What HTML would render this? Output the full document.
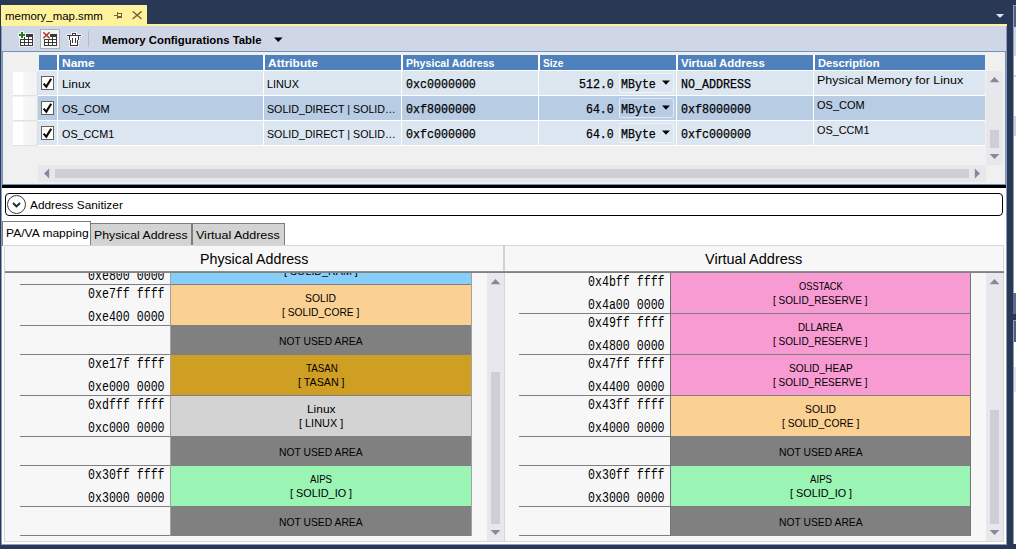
<!DOCTYPE html>
<html lang="en">
<head>
<meta charset="utf-8">
<title>memory_map.smm</title>
<style>
html,body{margin:0;padding:0;}
body{width:1016px;height:549px;overflow:hidden;background:#293955;font-family:"Liberation Sans",sans-serif;font-size:12px;color:#000;}
#root{position:relative;width:1016px;height:549px;overflow:hidden;background:#293955;}
#root div,#root svg{position:absolute;box-sizing:border-box;}
.t{white-space:pre;transform-origin:0 0;}
.m{font-family:"Liberation Mono",monospace;}
</style>
</head>
<body>
<div id="root">
<div style="left:1px;top:5px;width:146px;height:21px;background:#fff29d;"></div>
<div style="left:1px;top:24px;width:1006px;height:2px;background:#fff29d;"></div>
<div class="t" style="left:5.26px;top:8px;font-size:11.5px;line-height:16px;height:16px;transform:scaleX(0.9948);">memory_map.smm</div>
<svg style="left:113px;top:11px" width="10" height="10" viewBox="0 0 10 10"><g fill="none" stroke="#75633d" stroke-width="1" shape-rendering="crispEdges"><path d="M0.5 4.5H4"/><path d="M4.5 1V8"/><path d="M4.5 2.5H8.5V6.5H4.5"/><path d="M4.5 5.5H8.5"/></g></svg>
<svg style="left:132px;top:11px" width="10" height="10" viewBox="0 0 10 10"><path d="M0.6 0.3L9.6 8M9.6 0.3L0.6 8" stroke="#75633d" stroke-width="1.45" fill="none"/></svg>
<svg style="left:995px;top:13px" width="10" height="6" viewBox="0 0 10 6"><path d="M1 1H9L5 5Z" fill="#dfe3ec"/></svg>
<div style="left:1px;top:26px;width:1006px;height:25px;background:#8e9bbc;"></div>
<div style="left:2px;top:26px;width:1004px;height:25px;background:#cfd6e5;"></div>
<svg style="left:19px;top:33px" width="15" height="14" viewBox="0 0 15 14" shape-rendering="crispEdges"><rect x="6" y="0" width="9" height="3" fill="rgba(255,255,255,0.62)"/><rect x="0" y="3" width="15" height="11" fill="rgba(255,255,255,0.62)"/><rect x="7" y="1" width="7" height="3" fill="#3a3a3a"/><rect x="5" y="4" width="9" height="3" fill="#3a3a3a"/><rect x="1" y="6" width="13" height="7" fill="#3a3a3a"/><rect x="6" y="4" width="3" height="2" fill="#fbfbfb"/><rect x="10" y="4" width="3" height="2" fill="#fbfbfb"/><rect x="2" y="7" width="3" height="2" fill="#fbfbfb"/><rect x="6" y="7" width="3" height="2" fill="#fbfbfb"/><rect x="10" y="7" width="3" height="2" fill="#fbfbfb"/><rect x="2" y="10" width="3" height="2" fill="#fbfbfb"/><rect x="6" y="10" width="3" height="2" fill="#fbfbfb"/><rect x="10" y="10" width="3" height="2" fill="#fbfbfb"/></svg>
<svg style="left:18px;top:31px" width="8" height="8" viewBox="0 0 8 8" shape-rendering="crispEdges"><rect x="2" y="0" width="4" height="8" fill="rgba(255,255,255,0.62)"/><rect x="0" y="2" width="8" height="4" fill="rgba(255,255,255,0.62)"/><rect x="3" y="1" width="2" height="6" fill="#1e7d1e"/><rect x="1" y="3" width="6" height="2" fill="#1e7d1e"/></svg>
<div style="left:40px;top:29px;width:20px;height:20px;background:#f5f5f5;border:1px solid #adb1b9;"></div>
<svg style="left:43px;top:33px" width="15" height="14" viewBox="0 0 15 14" shape-rendering="crispEdges"><rect x="7" y="1" width="7" height="3" fill="#3a3a3a"/><rect x="5" y="4" width="9" height="3" fill="#3a3a3a"/><rect x="1" y="6" width="13" height="7" fill="#3a3a3a"/><rect x="6" y="4" width="3" height="2" fill="#fbfbfb"/><rect x="10" y="4" width="3" height="2" fill="#fbfbfb"/><rect x="2" y="7" width="3" height="2" fill="#fbfbfb"/><rect x="6" y="7" width="3" height="2" fill="#fbfbfb"/><rect x="10" y="7" width="3" height="2" fill="#fbfbfb"/><rect x="2" y="10" width="3" height="2" fill="#fbfbfb"/><rect x="6" y="10" width="3" height="2" fill="#fbfbfb"/><rect x="10" y="10" width="3" height="2" fill="#fbfbfb"/></svg>
<svg style="left:42px;top:31px" width="9" height="9" viewBox="0 0 9 9"><path d="M1.3 1.2L7.6 7.2M7.6 1.2L1.3 7.2" stroke="#f5f5f5" stroke-width="3" fill="none"/><path d="M1.3 1.2L7.6 7.2M7.6 1.2L1.3 7.2" stroke="#b3331f" stroke-width="1.45" fill="none"/></svg>
<svg style="left:66px;top:32px" width="16" height="15" viewBox="0 0 16 15" shape-rendering="crispEdges"><rect x="5" y="0" width="6" height="3" fill="rgba(255,255,255,0.62)"/><rect x="0" y="2" width="16" height="3" fill="rgba(255,255,255,0.62)"/><rect x="2" y="4" width="12" height="5" fill="rgba(255,255,255,0.62)"/><rect x="3" y="8" width="10" height="7" fill="rgba(255,255,255,0.62)"/><rect x="6" y="1" width="4" height="2" fill="#3a3a3a"/><rect x="7" y="2" width="2" height="1" fill="#fbfbfb"/><rect x="1" y="3" width="14" height="1" fill="#3a3a3a"/><rect x="3" y="4" width="10" height="4" fill="#3a3a3a"/><rect x="4" y="4" width="8" height="4" fill="#fbfbfb"/><rect x="4" y="8" width="8" height="6" fill="#3a3a3a"/><rect x="5" y="8" width="6" height="5" fill="#fbfbfb"/><rect x="6" y="6" width="1" height="5" fill="#3a3a3a"/><rect x="9" y="6" width="1" height="5" fill="#3a3a3a"/></svg>
<div style="left:88px;top:31px;width:1px;height:16px;background:#b3bac9;"></div>
<div class="t" style="left:102.06px;top:32px;font-size:11.5px;line-height:16px;height:16px;font-weight:bold;transform:scaleX(0.9881);">Memory Configurations Table</div>
<svg style="left:273px;top:37px" width="10" height="6" viewBox="0 0 10 6"><path d="M1 0.5H9.6L5.3 5Z" fill="#000"/></svg>
<div style="left:1px;top:51px;width:1006px;height:134px;background:#8e9bbc;"></div>
<div style="left:2px;top:51px;width:1004px;height:134px;background:#f0f0f0;border:1px solid #7192b8;"></div>
<div style="left:39px;top:55px;width:946px;height:16px;background:#fff;"></div>
<div style="left:39px;top:55px;width:18px;height:15px;background:#4f81bd;"></div>
<div style="left:59px;top:55px;width:204px;height:15px;background:#4f81bd;"></div>
<div class="t" style="left:62.21px;top:55px;font-size:11.5px;line-height:16px;height:16px;color:#fff;font-weight:bold;transform:scaleX(1.0400);">Name</div>
<div style="left:265px;top:55px;width:136px;height:15px;background:#4f81bd;"></div>
<div class="t" style="left:268.45px;top:55px;font-size:11.5px;line-height:16px;height:16px;color:#fff;font-weight:bold;transform:scaleX(1.0417);">Attribute</div>
<div style="left:403px;top:55px;width:135px;height:15px;background:#4f81bd;"></div>
<div class="t" style="left:406.12px;top:55px;font-size:11.5px;line-height:16px;height:16px;color:#fff;font-weight:bold;transform:scaleX(0.9271);">Physical Address</div>
<div style="left:540px;top:55px;width:136px;height:15px;background:#4f81bd;"></div>
<div class="t" style="left:542.67px;top:55px;font-size:11.5px;line-height:16px;height:16px;color:#fff;font-weight:bold;transform:scaleX(0.8818);">Size</div>
<div style="left:678px;top:55px;width:135px;height:15px;background:#4f81bd;"></div>
<div class="t" style="left:681.05px;top:55px;font-size:11.5px;line-height:16px;height:16px;color:#fff;font-weight:bold;transform:scaleX(0.9929);">Virtual Address</div>
<div style="left:815px;top:55px;width:170px;height:15px;background:#4f81bd;"></div>
<div class="t" style="left:818.18px;top:55px;font-size:11.5px;line-height:16px;height:16px;color:#fff;font-weight:bold;transform:scaleX(0.9726);">Description</div>
<div style="left:13px;top:72px;width:25px;height:23px;background:linear-gradient(90deg,#fff 0,#fff 40%,#f7f8fa 41%,#f1f2f4 100%);border-right:1px solid #dcdcdc;"></div>
<div style="left:13px;top:95px;width:25px;height:1px;background:#e1e1e1;"></div>
<div style="left:38px;top:71px;width:947px;height:24px;background:#fff;"></div>
<div style="left:38px;top:71px;width:19px;height:24px;background:#dce6f1;"></div>
<div style="left:58px;top:71px;width:205px;height:24px;background:#dce6f1;"></div>
<div style="left:264px;top:71px;width:137px;height:24px;background:#dce6f1;"></div>
<div style="left:402px;top:71px;width:136px;height:24px;background:#dce6f1;"></div>
<div style="left:539px;top:71px;width:137px;height:24px;background:#dce6f1;"></div>
<div style="left:677px;top:71px;width:136px;height:24px;background:#dce6f1;"></div>
<div style="left:814px;top:71px;width:171px;height:24px;background:#dce6f1;"></div>
<div style="left:38px;top:95px;width:947px;height:1px;background:#fff;"></div>
<div style="left:41px;top:76px;width:13px;height:14px;background:#fff;border:1px solid #5f5f5f;"></div>
<svg style="left:42px;top:77px" width="11" height="12" viewBox="0 0 11 12"><path d="M1.6 6.6L4.3 9.6L9.2 1.8" stroke="#0a0a0a" stroke-width="2.15" fill="none"/></svg>
<div class="t" style="left:62.02px;top:76px;font-size:11.5px;line-height:16px;height:16px;transform:scaleX(1.0346);">Linux</div>
<div class="t" style="left:266.86px;top:76px;font-size:11.5px;line-height:16px;height:16px;transform:scaleX(0.9422);">LINUX</div>
<div class="t m" style="left:406.08px;top:77px;font-size:12px;line-height:16px;height:16px;transform:scaleX(0.9700);-webkit-text-stroke:0.25px #000;">0xc0000000</div>
<div class="t m" style="left:579.33px;top:77px;font-size:12px;line-height:16px;height:16px;transform:scaleX(0.9676);-webkit-text-stroke:0.25px #000;">512.0</div>
<div style="left:619px;top:73px;width:55px;height:20px;background:transparent;border:1px solid rgba(255,255,255,0.55);border-radius:2px;"></div>
<div class="t m" style="left:620.58px;top:77px;font-size:12px;line-height:16px;height:16px;transform:scaleX(0.9676);-webkit-text-stroke:0.25px #000;">MByte</div>
<svg style="left:661px;top:80px" width="10" height="6" viewBox="0 0 10 6"><path d="M1 0.5H9L5 4.8Z" fill="#000"/></svg>
<div class="t m" style="left:680.83px;top:77px;font-size:12px;line-height:16px;height:16px;transform:scaleX(0.9736);-webkit-text-stroke:0.25px #000;">NO_ADDRESS</div>
<div class="t" style="left:816.97px;top:72px;font-size:11.5px;line-height:16px;height:16px;transform:scaleX(1.0838);">Physical Memory for Linux</div>
<div style="left:13px;top:97px;width:25px;height:23px;background:linear-gradient(90deg,#fff 0,#fff 40%,#f7f8fa 41%,#f1f2f4 100%);border-right:1px solid #dcdcdc;"></div>
<div style="left:13px;top:120px;width:25px;height:1px;background:#e1e1e1;"></div>
<div style="left:38px;top:96px;width:947px;height:24px;background:#fff;"></div>
<div style="left:38px;top:96px;width:19px;height:24px;background:#b8cce4;"></div>
<div style="left:58px;top:96px;width:205px;height:24px;background:#b8cce4;"></div>
<div style="left:264px;top:96px;width:137px;height:24px;background:#b8cce4;"></div>
<div style="left:402px;top:96px;width:136px;height:24px;background:#b8cce4;"></div>
<div style="left:539px;top:96px;width:137px;height:24px;background:#b8cce4;"></div>
<div style="left:677px;top:96px;width:136px;height:24px;background:#b8cce4;"></div>
<div style="left:814px;top:96px;width:171px;height:24px;background:#b8cce4;"></div>
<div style="left:38px;top:120px;width:947px;height:1px;background:#fff;"></div>
<div style="left:41px;top:101px;width:13px;height:14px;background:#fff;border:1px solid #5f5f5f;"></div>
<svg style="left:42px;top:102px" width="11" height="12" viewBox="0 0 11 12"><path d="M1.6 6.6L4.3 9.6L9.2 1.8" stroke="#0a0a0a" stroke-width="2.15" fill="none"/></svg>
<div class="t" style="left:62.09px;top:101px;font-size:11.5px;line-height:16px;height:16px;transform:scaleX(0.9562);">OS_COM</div>
<div class="t" style="left:266.87px;top:101px;font-size:11.5px;line-height:16px;height:16px;transform:scaleX(0.9263);">SOLID_DIRECT | SOLID…</div>
<div class="t m" style="left:406.08px;top:102px;font-size:12px;line-height:16px;height:16px;transform:scaleX(0.9700);-webkit-text-stroke:0.25px #000;">0xf8000000</div>
<div class="t m" style="left:586.34px;top:102px;font-size:12px;line-height:16px;height:16px;transform:scaleX(0.9593);-webkit-text-stroke:0.25px #000;">64.0</div>
<div style="left:619px;top:98px;width:55px;height:20px;background:transparent;border:1px solid rgba(255,255,255,0.55);border-radius:2px;"></div>
<div class="t m" style="left:620.58px;top:102px;font-size:12px;line-height:16px;height:16px;transform:scaleX(0.9676);-webkit-text-stroke:0.25px #000;">MByte</div>
<svg style="left:661px;top:105px" width="10" height="6" viewBox="0 0 10 6"><path d="M1 0.5H9L5 4.8Z" fill="#000"/></svg>
<div class="t m" style="left:680.83px;top:102px;font-size:12px;line-height:16px;height:16px;transform:scaleX(0.9736);-webkit-text-stroke:0.25px #000;">0xf8000000</div>
<div class="t" style="left:817.09px;top:97px;font-size:11.5px;line-height:16px;height:16px;transform:scaleX(0.9562);">OS_COM</div>
<div style="left:13px;top:122px;width:25px;height:23px;background:linear-gradient(90deg,#fff 0,#fff 40%,#f7f8fa 41%,#f1f2f4 100%);border-right:1px solid #dcdcdc;"></div>
<div style="left:13px;top:145px;width:25px;height:1px;background:#e1e1e1;"></div>
<div style="left:38px;top:121px;width:947px;height:24px;background:#fff;"></div>
<div style="left:38px;top:121px;width:19px;height:24px;background:#dce6f1;"></div>
<div style="left:58px;top:121px;width:205px;height:24px;background:#dce6f1;"></div>
<div style="left:264px;top:121px;width:137px;height:24px;background:#dce6f1;"></div>
<div style="left:402px;top:121px;width:136px;height:24px;background:#dce6f1;"></div>
<div style="left:539px;top:121px;width:137px;height:24px;background:#dce6f1;"></div>
<div style="left:677px;top:121px;width:136px;height:24px;background:#dce6f1;"></div>
<div style="left:814px;top:121px;width:171px;height:24px;background:#dce6f1;"></div>
<div style="left:38px;top:145px;width:947px;height:1px;background:#fff;"></div>
<div style="left:41px;top:126px;width:13px;height:14px;background:#fff;border:1px solid #5f5f5f;"></div>
<svg style="left:42px;top:127px" width="11" height="12" viewBox="0 0 11 12"><path d="M1.6 6.6L4.3 9.6L9.2 1.8" stroke="#0a0a0a" stroke-width="2.15" fill="none"/></svg>
<div class="t" style="left:62.11px;top:126px;font-size:11.5px;line-height:16px;height:16px;transform:scaleX(0.9380);">OS_CCM1</div>
<div class="t" style="left:266.87px;top:126px;font-size:11.5px;line-height:16px;height:16px;transform:scaleX(0.9263);">SOLID_DIRECT | SOLID…</div>
<div class="t m" style="left:406.08px;top:127px;font-size:12px;line-height:16px;height:16px;transform:scaleX(0.9700);-webkit-text-stroke:0.25px #000;">0xfc000000</div>
<div class="t m" style="left:586.34px;top:127px;font-size:12px;line-height:16px;height:16px;transform:scaleX(0.9593);-webkit-text-stroke:0.25px #000;">64.0</div>
<div style="left:619px;top:123px;width:55px;height:20px;background:transparent;border:1px solid rgba(255,255,255,0.55);border-radius:2px;"></div>
<div class="t m" style="left:620.58px;top:127px;font-size:12px;line-height:16px;height:16px;transform:scaleX(0.9676);-webkit-text-stroke:0.25px #000;">MByte</div>
<svg style="left:661px;top:130px" width="10" height="6" viewBox="0 0 10 6"><path d="M1 0.5H9L5 4.8Z" fill="#000"/></svg>
<div class="t m" style="left:680.83px;top:127px;font-size:12px;line-height:16px;height:16px;transform:scaleX(0.9736);-webkit-text-stroke:0.25px #000;">0xfc000000</div>
<div class="t" style="left:817.11px;top:122px;font-size:11.5px;line-height:16px;height:16px;transform:scaleX(0.9426);">OS_CCM1</div>
<div style="left:986px;top:71px;width:17px;height:94px;background:#e8e8ec;"></div>
<svg style="left:989px;top:76px" width="11" height="7" viewBox="0 0 11 7"><path d="M0.6 6.3L5.5 1.1L10.4 6.3Z" fill="#868999"/></svg>
<div style="left:990px;top:130px;width:9px;height:18px;background:#cecfd4;"></div>
<svg style="left:989px;top:153px" width="11" height="7" viewBox="0 0 11 7"><path d="M0.6 0.9L5.5 6.1L10.4 0.9Z" fill="#868999"/></svg>
<div style="left:38px;top:165px;width:948px;height:17px;background:#e8e8ec;"></div>
<svg style="left:43px;top:168px" width="7" height="11" viewBox="0 0 7 11"><path d="M6.2 0.5L1 5.5L6.2 10.5Z" fill="#868999"/></svg>
<div style="left:55px;top:169px;width:914px;height:9px;background:#cecfd4;"></div>
<svg style="left:974px;top:168px" width="7" height="11" viewBox="0 0 7 11"><path d="M0.8 0.5L6 5.5L0.8 10.5Z" fill="#868999"/></svg>
<div style="left:1px;top:185px;width:1006px;height:3px;background:#8e9bbc;"></div>
<div style="left:2px;top:185px;width:1004px;height:3px;background:#000;"></div>
<div style="left:1px;top:188px;width:1006px;height:357px;background:#8e9bbc;"></div>
<div style="left:2px;top:188px;width:1004px;height:356px;background:#fff;"></div>
<div style="left:5px;top:193px;width:998px;height:23px;background:#fff;border:1px solid #000;border-radius:4px;"></div>
<div style="left:7px;top:195px;width:19px;height:19px;background:#fff;border:1px solid #3a3a3a;border-radius:50%;"></div>
<svg style="left:11px;top:201px" width="11" height="8" viewBox="0 0 11 8"><path d="M2 2L5.5 5.5L9 2" stroke="#222" stroke-width="1.8" fill="none"/></svg>
<div class="t" style="left:30.15px;top:197px;font-size:11.5px;line-height:16px;height:16px;transform:scaleX(1.0300);">Address Sanitizer</div>
<div style="left:90px;top:223px;width:102px;height:23px;background:#d3d3d3;border:1px solid #7c7c7c;border-bottom:none;"></div>
<div style="left:192px;top:223px;width:93px;height:23px;background:#d3d3d3;border:1px solid #7c7c7c;border-bottom:none;"></div>
<div style="left:2px;top:221px;width:89px;height:25px;background:#fff;border:1px solid #7c7c7c;border-bottom:none;"></div>
<div class="t" style="left:5.75px;top:225px;font-size:11.5px;line-height:16px;height:16px;transform:scaleX(1.0474);">PA/VA mapping</div>
<div class="t" style="left:93.98px;top:227px;font-size:11.5px;line-height:16px;height:16px;transform:scaleX(1.0686);">Physical Address</div>
<div class="t" style="left:196.3px;top:227px;font-size:11.5px;line-height:16px;height:16px;transform:scaleX(1.0864);">Virtual Address</div>
<div style="left:4px;top:245px;width:1000px;height:297px;background:#f7f7f7;border:1px solid #d6d6d6;"></div>
<div class="t" style="left:200.32px;top:250px;font-size:14.5px;line-height:18px;height:18px;transform:scaleX(0.9807);">Physical Address</div>
<div class="t" style="left:705.05px;top:250px;font-size:14.5px;line-height:18px;height:18px;">Virtual Address</div>
<div style="left:5px;top:271px;width:999px;height:1px;background:#8e8e8e;"></div>
<div style="left:5px;top:272px;width:999px;height:1px;background:#818181;"></div>
<div style="left:503px;top:246px;width:2px;height:25px;background:#d2d2d2;"></div>
<div style="left:504px;top:273px;width:1px;height:268px;background:#d6d6d6;"></div>
<div style="left:5px;top:273px;width:999px;height:268px;overflow:hidden;"><div style="left:-5px;top:-273px;width:1016px;height:549px;">
<div style="left:171px;top:273px;width:300px;height:11px;background:#87cefa;"></div>
<div style="left:20px;top:284px;width:451px;height:1px;background:#7f7f7f;"></div>
<div class="t" style="left:283.94px;top:263px;font-size:11.5px;line-height:16px;height:16px;transform:scaleX(0.9314);">[ SOLID_RAM ]</div>
<div class="t m" style="left:88.27px;top:267px;font-size:14px;line-height:18px;height:18px;transform:scaleX(0.8286);">0xe800 0000</div>
<div style="left:171px;top:285px;width:300px;height:40px;background:#fad193;"></div>
<div style="left:20px;top:325px;width:451px;height:1px;background:#7f7f7f;"></div>
<div class="t" style="left:305.48px;top:290px;font-size:11.5px;line-height:16px;height:16px;transform:scaleX(0.8985);">SOLID</div>
<div class="t" style="left:282.49px;top:304px;font-size:11.5px;line-height:16px;height:16px;transform:scaleX(0.8900);">[ SOLID_CORE ]</div>
<div class="t m" style="left:88.27px;top:285px;font-size:14px;line-height:18px;height:18px;transform:scaleX(0.8286);">0xe7ff ffff</div>
<div class="t m" style="left:88.27px;top:308px;font-size:14px;line-height:18px;height:18px;transform:scaleX(0.8286);">0xe400 0000</div>
<div style="left:171px;top:326px;width:300px;height:28px;background:#808080;"></div>
<div style="left:20px;top:354px;width:451px;height:1px;background:#7f7f7f;"></div>
<div class="t" style="left:278.98px;top:333px;font-size:11.5px;line-height:16px;height:16px;transform:scaleX(0.8984);">NOT USED AREA</div>
<div style="left:171px;top:355px;width:300px;height:40px;background:#cf9f24;"></div>
<div style="left:20px;top:395px;width:451px;height:1px;background:#7f7f7f;"></div>
<div class="t" style="left:305.5px;top:360px;font-size:11.5px;line-height:16px;height:16px;transform:scaleX(0.8486);">TASAN</div>
<div class="t" style="left:297.94px;top:374px;font-size:11.5px;line-height:16px;height:16px;transform:scaleX(0.9302);">[ TASAN ]</div>
<div class="t m" style="left:88.27px;top:355px;font-size:14px;line-height:18px;height:18px;transform:scaleX(0.8286);">0xe17f ffff</div>
<div class="t m" style="left:88.27px;top:378px;font-size:14px;line-height:18px;height:18px;transform:scaleX(0.8286);">0xe000 0000</div>
<div style="left:171px;top:396px;width:300px;height:40px;background:#d3d3d3;"></div>
<div style="left:20px;top:436px;width:451px;height:1px;background:#7f7f7f;"></div>
<div class="t" style="left:306.72px;top:401px;font-size:11.5px;line-height:16px;height:16px;transform:scaleX(1.0346);">Linux</div>
<div class="t" style="left:298.93px;top:415px;font-size:11.5px;line-height:16px;height:16px;transform:scaleX(0.9478);">[ LINUX ]</div>
<div class="t m" style="left:88.27px;top:396px;font-size:14px;line-height:18px;height:18px;transform:scaleX(0.8286);">0xdfff ffff</div>
<div class="t m" style="left:88.27px;top:419px;font-size:14px;line-height:18px;height:18px;transform:scaleX(0.8286);">0xc000 0000</div>
<div style="left:171px;top:437px;width:300px;height:28px;background:#808080;"></div>
<div style="left:20px;top:465px;width:451px;height:1px;background:#7f7f7f;"></div>
<div class="t" style="left:278.98px;top:444px;font-size:11.5px;line-height:16px;height:16px;transform:scaleX(0.8984);">NOT USED AREA</div>
<div style="left:171px;top:466px;width:300px;height:40px;background:#9af4b4;"></div>
<div style="left:20px;top:506px;width:451px;height:1px;background:#7f7f7f;"></div>
<div class="t" style="left:310.25px;top:471px;font-size:11.5px;line-height:16px;height:16px;transform:scaleX(0.8423);">AIPS</div>
<div class="t" style="left:290.06px;top:485px;font-size:11.5px;line-height:16px;height:16px;transform:scaleX(0.9437);">[ SOLID_IO ]</div>
<div class="t m" style="left:88.27px;top:466px;font-size:14px;line-height:18px;height:18px;transform:scaleX(0.8286);">0x30ff ffff</div>
<div class="t m" style="left:88.27px;top:489px;font-size:14px;line-height:18px;height:18px;transform:scaleX(0.8286);">0x3000 0000</div>
<div style="left:171px;top:507px;width:300px;height:28px;background:#808080;"></div>
<div style="left:20px;top:535px;width:451px;height:1px;background:#7f7f7f;"></div>
<div class="t" style="left:278.98px;top:514px;font-size:11.5px;line-height:16px;height:16px;transform:scaleX(0.8984);">NOT USED AREA</div>
<div style="left:170px;top:273px;width:1px;height:263px;background:#a2a2a2;"></div>
<div style="left:471px;top:273px;width:1px;height:263px;background:#a2a2a2;"></div>
<div style="left:487px;top:273px;width:17px;height:268px;background:#e8e8ec;"></div>
<svg style="left:490px;top:278px" width="11" height="7" viewBox="0 0 11 7"><path d="M0.6 6.3L5.5 1.1L10.4 6.3Z" fill="#868999"/></svg>
<div style="left:491px;top:372px;width:9px;height:152px;background:#cecfd4;"></div>
<svg style="left:490px;top:529px" width="11" height="7" viewBox="0 0 11 7"><path d="M0.6 0.9L5.5 6.1L10.4 0.9Z" fill="#868999"/></svg>
<div style="left:671px;top:273px;width:299px;height:40px;background:#f99bd3;"></div>
<div style="left:519px;top:313px;width:451px;height:1px;background:#7f7f7f;"></div>
<div class="t" style="left:798.64px;top:278px;font-size:11.5px;line-height:16px;height:16px;transform:scaleX(0.8094);">OSSTACK</div>
<div class="t" style="left:773.45px;top:292px;font-size:11.5px;line-height:16px;height:16px;transform:scaleX(0.8706);">[ SOLID_RESERVE ]</div>
<div class="t m" style="left:587.67px;top:273px;font-size:14px;line-height:18px;height:18px;transform:scaleX(0.8286);">0x4bff ffff</div>
<div class="t m" style="left:587.67px;top:296px;font-size:14px;line-height:18px;height:18px;transform:scaleX(0.8286);">0x4a00 0000</div>
<div style="left:671px;top:314px;width:299px;height:40px;background:#f99bd3;"></div>
<div style="left:519px;top:354px;width:451px;height:1px;background:#7f7f7f;"></div>
<div class="t" style="left:798.22px;top:319px;font-size:11.5px;line-height:16px;height:16px;transform:scaleX(0.8559);">DLLAREA</div>
<div class="t" style="left:773.45px;top:333px;font-size:11.5px;line-height:16px;height:16px;transform:scaleX(0.8706);">[ SOLID_RESERVE ]</div>
<div class="t m" style="left:587.67px;top:314px;font-size:14px;line-height:18px;height:18px;transform:scaleX(0.8286);">0x49ff ffff</div>
<div class="t m" style="left:587.67px;top:337px;font-size:14px;line-height:18px;height:18px;transform:scaleX(0.8286);">0x4800 0000</div>
<div style="left:671px;top:355px;width:299px;height:40px;background:#f99bd3;"></div>
<div style="left:519px;top:395px;width:451px;height:1px;background:#7f7f7f;"></div>
<div class="t" style="left:788.69px;top:360px;font-size:11.5px;line-height:16px;height:16px;transform:scaleX(0.8824);">SOLID_HEAP</div>
<div class="t" style="left:773.45px;top:374px;font-size:11.5px;line-height:16px;height:16px;transform:scaleX(0.8706);">[ SOLID_RESERVE ]</div>
<div class="t m" style="left:587.67px;top:355px;font-size:14px;line-height:18px;height:18px;transform:scaleX(0.8286);">0x47ff ffff</div>
<div class="t m" style="left:587.67px;top:378px;font-size:14px;line-height:18px;height:18px;transform:scaleX(0.8286);">0x4400 0000</div>
<div style="left:671px;top:396px;width:299px;height:40px;background:#fad193;"></div>
<div style="left:519px;top:436px;width:451px;height:1px;background:#7f7f7f;"></div>
<div class="t" style="left:805.18px;top:401px;font-size:11.5px;line-height:16px;height:16px;transform:scaleX(0.8985);">SOLID</div>
<div class="t" style="left:782.18px;top:415px;font-size:11.5px;line-height:16px;height:16px;transform:scaleX(0.8900);">[ SOLID_CORE ]</div>
<div class="t m" style="left:587.67px;top:396px;font-size:14px;line-height:18px;height:18px;transform:scaleX(0.8286);">0x43ff ffff</div>
<div class="t m" style="left:587.67px;top:419px;font-size:14px;line-height:18px;height:18px;transform:scaleX(0.8286);">0x4000 0000</div>
<div style="left:671px;top:437px;width:299px;height:28px;background:#808080;"></div>
<div style="left:519px;top:465px;width:451px;height:1px;background:#7f7f7f;"></div>
<div class="t" style="left:778.68px;top:444px;font-size:11.5px;line-height:16px;height:16px;transform:scaleX(0.8984);">NOT USED AREA</div>
<div style="left:671px;top:466px;width:299px;height:40px;background:#9af4b4;"></div>
<div style="left:519px;top:506px;width:451px;height:1px;background:#7f7f7f;"></div>
<div class="t" style="left:809.95px;top:471px;font-size:11.5px;line-height:16px;height:16px;transform:scaleX(0.8423);">AIPS</div>
<div class="t" style="left:789.76px;top:485px;font-size:11.5px;line-height:16px;height:16px;transform:scaleX(0.9437);">[ SOLID_IO ]</div>
<div class="t m" style="left:587.67px;top:466px;font-size:14px;line-height:18px;height:18px;transform:scaleX(0.8286);">0x30ff ffff</div>
<div class="t m" style="left:587.67px;top:489px;font-size:14px;line-height:18px;height:18px;transform:scaleX(0.8286);">0x3000 0000</div>
<div style="left:671px;top:507px;width:299px;height:28px;background:#808080;"></div>
<div style="left:519px;top:535px;width:451px;height:1px;background:#7f7f7f;"></div>
<div class="t" style="left:778.68px;top:514px;font-size:11.5px;line-height:16px;height:16px;transform:scaleX(0.8984);">NOT USED AREA</div>
<div style="left:670px;top:273px;width:1px;height:263px;background:#757575;"></div>
<div style="left:970px;top:273px;width:1px;height:263px;background:#757575;"></div>
<div style="left:986px;top:273px;width:17px;height:268px;background:#e8e8ec;"></div>
<svg style="left:989px;top:278px" width="11" height="7" viewBox="0 0 11 7"><path d="M0.6 6.3L5.5 1.1L10.4 6.3Z" fill="#868999"/></svg>
<div style="left:990px;top:410px;width:9px;height:114px;background:#cecfd4;"></div>
<svg style="left:989px;top:529px" width="11" height="7" viewBox="0 0 11 7"><path d="M0.6 0.9L5.5 6.1L10.4 0.9Z" fill="#868999"/></svg>
</div></div>
<div style="left:1013px;top:5px;width:3px;height:309px;background:#fff;"></div>
<div style="left:1013px;top:5px;width:1px;height:309px;background:#8e9bbc;"></div>
<div style="left:1013px;top:5px;width:3px;height:1px;background:#8e9bbc;"></div>
<div style="left:1014px;top:6px;width:2px;height:21px;background:#4d6082;"></div>
<div style="left:1014px;top:27px;width:2px;height:29px;background:#cfd6e5;"></div>
<div style="left:1014px;top:75px;width:2px;height:2px;background:#cfcfcf;"></div>
<div style="left:1014px;top:116px;width:2px;height:20px;background:#ccd1de;"></div>
<div style="left:1013px;top:293px;width:3px;height:21px;background:#5b6c8e;"></div>
<div style="left:1013px;top:320px;width:3px;height:224px;background:#fff;"></div>
<div style="left:1013px;top:320px;width:1px;height:224px;background:#8e9bbc;"></div>
<div style="left:1013px;top:320px;width:3px;height:1px;background:#8e9bbc;"></div>
<div style="left:1014px;top:321px;width:2px;height:21px;background:#4d6082;"></div>
<div style="left:1014px;top:367px;width:2px;height:25px;background:#dfe3ee;"></div>
</div>
</body>
</html>
